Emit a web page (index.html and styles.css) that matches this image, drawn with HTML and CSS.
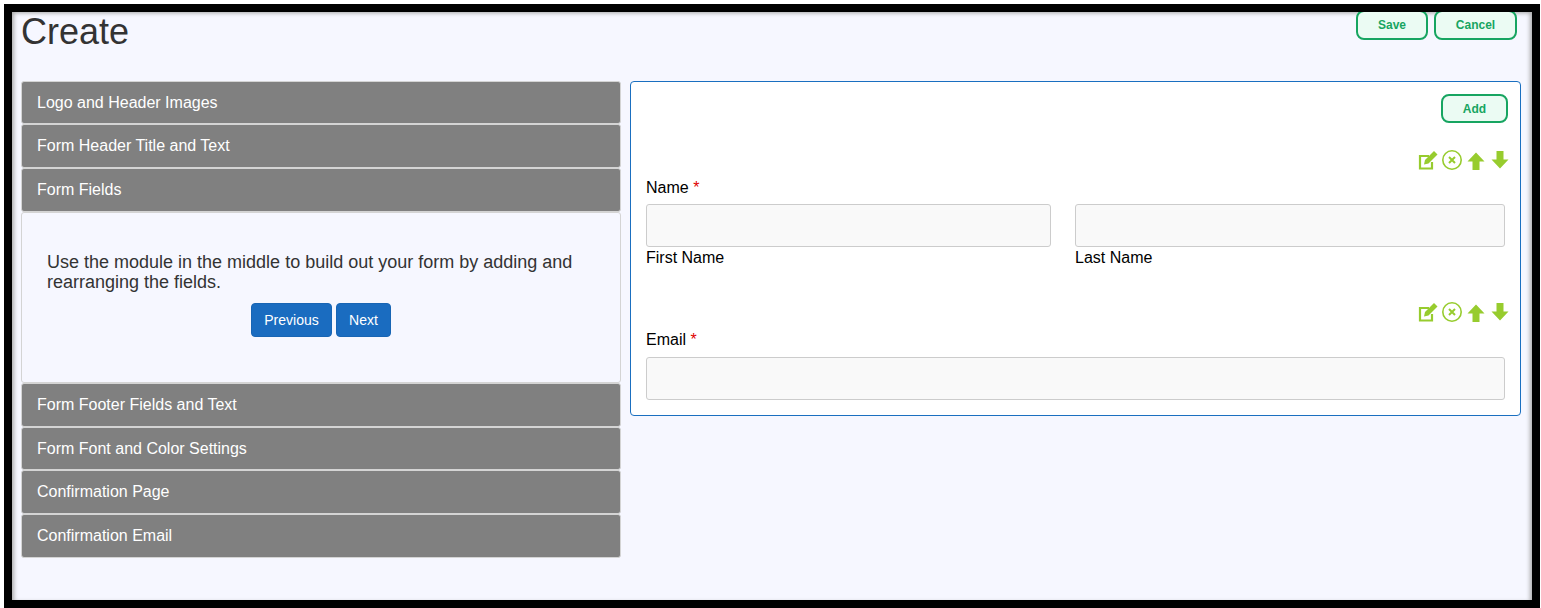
FILE: index.html
```html
<!DOCTYPE html>
<html lang="en">
<head>
<meta charset="utf-8">
<title>Create</title>
<link rel="stylesheet" href="styles.css">
</head>
<body>
<div class="frame">
  <div class="page">
    <header class="top">
      <h1 class="title">Create</h1>
      <div class="actions">
        <button class="btn-green btn-save">Save</button>
        <button class="btn-green btn-cancel">Cancel</button>
      </div>
    </header>
    <main class="columns">
      <section class="accordion">
        <div class="acc-head h43">Logo and Header Images</div>
        <div class="acc-head h44">Form Header Title and Text</div>
        <div class="acc-head h44 open">Form Fields</div>
        <div class="acc-panel">
          <p class="acc-text">Use the module in the middle to build out your form by adding and rearranging the fields.</p>
          <div class="nav-row">
            <button class="btn-blue btn-prev">Previous</button>
            <button class="btn-blue btn-next">Next</button>
          </div>
        </div>
        <div class="acc-head h44">Form Footer Fields and Text</div>
        <div class="acc-head h43">Form Font and Color Settings</div>
        <div class="acc-head h44">Confirmation Page</div>
        <div class="acc-head h44">Confirmation Email</div>
      </section>
      <section class="card">
        <div class="card-top"><button class="btn-green btn-add">Add</button></div>
        <div class="tools tools-first">
          <svg class="ico" viewBox="0 0 20 20"><path d="M14 12v6.500H2V6h9" fill="none" stroke="#97cc2e" stroke-width="2.200"/><path d="M6 14.500l1-4.500 9-9 3.500 3.500-9 9z" fill="#97cc2e"/></svg>
          <svg class="ico" viewBox="0 0 20 20"><circle cx="10" cy="10" r="9.200" fill="none" stroke="#97cc2e" stroke-width="1.600"/><path d="M7 7l6 6M13 7l-6 6" stroke="#97cc2e" stroke-width="2" fill="none"/></svg>
          <svg class="ico arrow-up" viewBox="0 0 20 20"><path d="M10 1.500L18.500 10.500H13.500V19H6.500V10.500H1.500z" fill="#97cc2e"/></svg>
          <svg class="ico" viewBox="0 0 20 20"><path d="M10 18.500L18.500 9.500H13.500V1H6.500V9.500H1.500z" fill="#97cc2e"/></svg>
        </div>
        <div class="label">Name <span class="req">*</span></div>
        <div class="name-row">
          <div class="field-first">
            <div class="input"></div>
            <div class="sub">First Name</div>
          </div>
          <div class="field-last">
            <div class="input"></div>
            <div class="sub">Last Name</div>
          </div>
        </div>
        <div class="tools tools-second">
          <svg class="ico" viewBox="0 0 20 20"><path d="M14 12v6.500H2V6h9" fill="none" stroke="#97cc2e" stroke-width="2.200"/><path d="M6 14.500l1-4.500 9-9 3.500 3.500-9 9z" fill="#97cc2e"/></svg>
          <svg class="ico" viewBox="0 0 20 20"><circle cx="10" cy="10" r="9.200" fill="none" stroke="#97cc2e" stroke-width="1.600"/><path d="M7 7l6 6M13 7l-6 6" stroke="#97cc2e" stroke-width="2" fill="none"/></svg>
          <svg class="ico arrow-up" viewBox="0 0 20 20"><path d="M10 1.500L18.500 10.500H13.500V19H6.500V10.500H1.500z" fill="#97cc2e"/></svg>
          <svg class="ico" viewBox="0 0 20 20"><path d="M10 18.500L18.500 9.500H13.500V1H6.500V9.500H1.500z" fill="#97cc2e"/></svg>
        </div>
        <div class="label label-email">Email <span class="req">*</span></div>
        <div class="input"></div>
      </section>
    </main>
  </div>
</div>
</body>
</html>
```
FILE: styles.css
```css
* { box-sizing: border-box; }
html, body { margin: 0; padding: 0; background: #fff; height: 100%; overflow: hidden; }
body { font-family: "Liberation Sans", Arial, sans-serif; }
.frame {
  width: 1536px;
  height: 604px;
  margin: 4px 0 0 4px;
  border: 8px solid #000;
}
.page {
  height: 100%;
  background: #f6f7ff;
  box-shadow: inset 4px 3px 4px -2px #aaa, inset -4px 0 4px -2px #aaa;
  padding: 0 11px 0 9px;
  overflow: hidden;
}
.top { display: flex; justify-content: space-between; height: 69px; }
.title { margin: 0; font-size: 36px; font-weight: 400; line-height: 40px; color: #333; }
.actions { display: flex; gap: 6px; margin: -2px 4px 0 0; height: 30px; }
.btn-green {
  border: 2px solid #17a561;
  border-radius: 8px;
  background: #ebfbf3;
  color: #17a561;
  font: 700 12px "Liberation Sans", Arial, sans-serif;
  padding: 0;
}
.btn-save { width: 72px; }
.btn-cancel { width: 83px; }
.btn-add { width: 67px; height: 29px; }
.columns { display: flex; gap: 9px; align-items: flex-start; }
.accordion { width: 600px; flex: none; }
.acc-head {
  background: #808080;
  color: #fff;
  font-size: 16px;
  padding-left: 15px;
  display: flex;
  align-items: center;
  border: 1px solid #d4d4d4;
  border-radius: 3px;
}
.h43 { height: 43px; }
.h44 { height: 44px; }
.acc-panel {
  height: 171px;
  border: 1px solid #d4d4d4;
  border-radius: 3px;
  padding: 39px 25px 0;
  color: #333;
}
.acc-text { margin: 0; font-size: 18px; line-height: 20px; }
.nav-row { display: flex; justify-content: center; gap: 4px; margin-top: 11px; }
.btn-blue {
  height: 34px;
  background: #1a6cc0;
  border: 1px solid #1865b4;
  border-radius: 4px;
  color: #fff;
  font: 14px "Liberation Sans", Arial, sans-serif;
  padding: 0;
}
.btn-prev { width: 81px; }
.btn-next { width: 55px; }
.card {
  flex: 1;
  height: 335px;
  background: #fff;
  border: 1px solid #1a6fc0;
  border-radius: 4px;
  padding: 12px 15px 0;
}
.card-top { display: flex; justify-content: flex-end; margin-right: -3px; }
.tools { display: flex; justify-content: flex-end; gap: 4px; height: 20px; margin-right: -5px; }
.tools-first { margin-top: 27px; }
.tools-second { margin-top: 35px; }
.ico { width: 20px; height: 20px; display: block; }
.arrow-up { margin-top: 1px; }
.label { font-size: 16px; line-height: 18px; color: #000; margin-top: 9px; margin-bottom: 7px; }
.label-email { margin-bottom: 8px; }
.req { color: #e00000; }
.name-row { display: flex; gap: 24px; }
.field-first { width: 405px; }
.field-last { flex: 1; }
.input {
  height: 43px;
  background: #f9f9f9;
  border: 1px solid #ccc;
  border-radius: 3px;
}
.sub { font-size: 16px; line-height: 18px; color: #000; margin-top: 2px; }
```
